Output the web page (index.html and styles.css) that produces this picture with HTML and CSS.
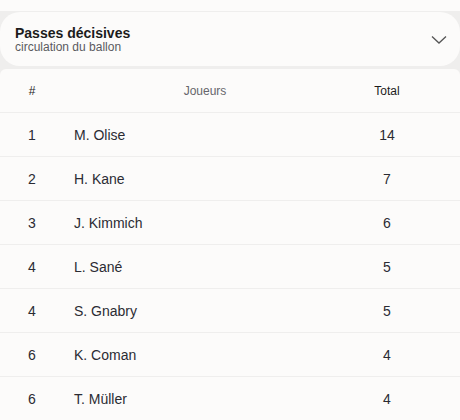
FILE: index.html
```html
<!DOCTYPE html>
<html>
<head>
<meta name="viewport" content="width=device-width, initial-scale=1">
<link rel="stylesheet" href="styles.css">
</head>
<body>

<div class="top-strip"></div>

<div class="stat-header">
  <div class="stat-title">
    <h2>Passes décisives</h2>
    <span>circulation du ballon</span>
  </div>
  <svg class="chevron" width="16" height="10" viewBox="0 0 16 10">
    <polyline points="1,1.5 8,8 15,1.5" fill="none" stroke="#555" stroke-width="1.3"/>
  </svg>
</div>

<div class="ranking">
  <div class="row head">
    <span class="rank">#</span>
    <span class="player">Joueurs</span>
    <span class="total">Total</span>
  </div>
  <div class="row"><span class="rank">1</span><span class="player">M. Olise</span><span class="total">14</span></div>
  <div class="row"><span class="rank">2</span><span class="player">H. Kane</span><span class="total">7</span></div>
  <div class="row"><span class="rank">3</span><span class="player">J. Kimmich</span><span class="total">6</span></div>
  <div class="row"><span class="rank">4</span><span class="player">L. Sané</span><span class="total">5</span></div>
  <div class="row"><span class="rank">4</span><span class="player">S. Gnabry</span><span class="total">5</span></div>
  <div class="row"><span class="rank">6</span><span class="player">K. Coman</span><span class="total">4</span></div>
  <div class="row"><span class="rank">6</span><span class="player">T. Müller</span><span class="total">4</span></div>
</div>

</body>
</html>
```

FILE: styles.css
```css
* {
  box-sizing: border-box;
}

body {
  margin: 0;
  background: #efeeed;
  font-family: "Liberation Sans", Arial, sans-serif;
  color: #2b2b33;
}

/* bottom of the card above */
.top-strip {
  height: 11px;
  background: #fcfbfa;
  margin-bottom: 1px;
}

/* Collapsible section header */
.stat-header {
  display: flex;
  align-items: center;
  justify-content: space-between;
  height: 54px;
  padding: 0 13px 0 15px;
  background: #fcfbfa;
  border-radius: 20px;
  margin-bottom: 3px;
}

.stat-title h2 {
  margin: 0;
  font-size: 14px;
  font-weight: bold;
  line-height: 16px;
  color: #1c1c1c;
}

.stat-title span {
  display: block;
  font-size: 12px;
  line-height: 13px;
  color: #5a5a60;
}

.chevron {
  margin-top: 2px;
}

/* Ranking table */
.ranking {
  background: #fcfbfa;
  border-radius: 6px 6px 0 0;
}

.row {
  display: grid;
  grid-template-columns: 64px 282px 82px;
  align-items: center;
  height: 44px;
  border-bottom: 1px solid #efeeed;
  font-size: 14px;
}

.row .rank {
  text-align: center;
}

.row .player {
  padding-left: 10px;
}

.row .total {
  text-align: center;
}

.row.head {
  font-size: 12px;
  color: #1c1c1c;
}

.row.head .player {
  padding-left: 0;
  text-align: center;
  color: #66666b;
}
```
